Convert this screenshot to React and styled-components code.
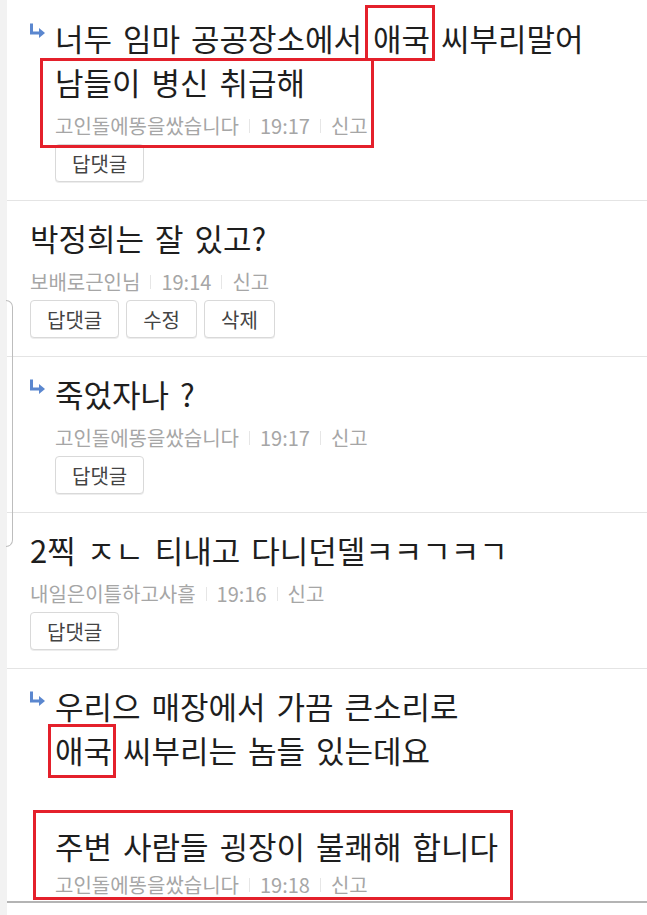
import React from 'react';
import styled, { createGlobalStyle, css } from 'styled-components';

const ReplyArrow = () => (
  <ArrowWrap viewBox="0 0 18 18" width="18" height="18">
    <path d="M3.5 1.5 V11 H12" fill="none" stroke="#5b87cf" strokeWidth="3" />
    <polygon points="11,6 17,11 11,16" fill="#5b87cf" />
  </ArrowWrap>
);

const MetaRow = ({ name, time, gap }) => (
  <Meta $gap={gap}>
    <span>{name}</span>
    <Divider />
    <span>{time}</span>
    <Divider />
    <span>신고</span>
  </Meta>
);

const App = () => {
  return (
    <>
      <GlobalStyle />
      <Page>
        <Rail />
        <List>
          <Comment $reply>
            <Text>
              <ReplyArrow />
              너두 임마 공공장소에서{' '}
              <Mark $t={-11} $r={-5} $b={-1} $l={-8}>애국</Mark> 씨부리말어
            </Text>
            <Boxed $t={-2} $r={-6} $b={-10} $l={-15}>
              <Text>남들이 병신 취급해</Text>
              <MetaRow name="고인돌에똥을쌌습니다" time="19:17" />
            </Boxed>
            <Actions>
              <ActionButton>답댓글</ActionButton>
            </Actions>
          </Comment>

          <Comment>
            <Text>박정희는 잘 있고?</Text>
            <MetaRow name="보배로근인님" time="19:14" />
            <Actions>
              <ActionButton>답댓글</ActionButton>
              <ActionButton>수정</ActionButton>
              <ActionButton>삭제</ActionButton>
            </Actions>
          </Comment>

          <Comment $reply>
            <Text>
              <ReplyArrow />
              죽었자나 ?
            </Text>
            <MetaRow name="고인돌에똥을쌌습니다" time="19:17" />
            <Actions>
              <ActionButton>답댓글</ActionButton>
            </Actions>
          </Comment>

          <Comment>
            <Text>2찍 ㅈㄴ 티내고 다니던델ㅋㅋㄱㅋㄱ</Text>
            <MetaRow name="내일은이틀하고사흘" time="19:16" />
            <Actions>
              <ActionButton>답댓글</ActionButton>
            </Actions>
          </Comment>

          <Comment $reply $last>
            <Text>
              <ReplyArrow />
              우리으 매장에서 가끔 큰소리로
              <br />
              <Mark $t={-4} $r={-4} $b={-6} $l={-7}>애국</Mark> 씨부리는 놈들 있는데요
            </Text>
            <Boxed $t={-14} $r={-15} $b={-3} $l={-22} $mt={52}>
              <Text>주변 사람들 굉장이 불쾌해 합니다</Text>
              <MetaRow name="고인돌에똥을쌌습니다" time="19:18" gap={5} />
            </Boxed>
          </Comment>
        </List>
        <FocusEdge />
      </Page>
    </>
  );
};

export default App;

const GlobalStyle = createGlobalStyle`
  body {
    margin: 0;
    padding: 0;
    background: #fff;
    font-family: "Noto Sans CJK KR", "Noto Sans", sans-serif;
  }
`;

const Page = styled.div`
  position: relative;
  display: flex;
  min-height: 915px;
`;

const Rail = styled.div`
  width: 7px;
  flex-shrink: 0;
  background: #f2f2f2;
`;

const List = styled.div`
  flex: 1;
  display: flex;
  flex-direction: column;
`;

const Comment = styled.article`
  padding: 15px 0 18px ${({ $reply }) => ($reply ? '48px' : '23px')};
  border-bottom: ${({ $last }) => ($last ? '2px solid #b4b4b4' : '1px solid #e4e4e4')};
  ${({ $last }) => $last && css`padding-bottom: 4px;`}

  &:first-child {
    padding-top: 16px;
  }
`;

const Text = styled.p`
  margin: 0;
  font-size: 31px;
  line-height: 44px;
  color: #1e1e1e;
  word-spacing: 4px;
  white-space: nowrap;
`;

const ArrowWrap = styled.svg`
  display: inline-block;
  vertical-align: top;
  margin: 6px 9px 0 -27px;
`;

const redFrame = css`
  position: relative;

  &::after {
    content: '';
    position: absolute;
    top: ${({ $t }) => $t}px;
    right: ${({ $r }) => $r}px;
    bottom: ${({ $b }) => $b}px;
    left: ${({ $l }) => $l}px;
    border: 3px solid #e4202b;
    pointer-events: none;
  }
`;

const Mark = styled.span`
  display: inline-block;
  ${redFrame}
`;

const Boxed = styled.div`
  width: fit-content;
  margin-top: ${({ $mt }) => $mt || 0}px;
  ${redFrame}
`;

const Meta = styled.div`
  display: flex;
  align-items: center;
  margin-top: ${({ $gap }) => ($gap ?? 10)}px;
  font-size: 20px;
  line-height: 24px;
  color: #a6a6a6;
  white-space: nowrap;
`;

const Divider = styled.i`
  display: block;
  width: 1px;
  height: 14px;
  margin: 0 10px;
  background: #e6e6e6;
`;

const Actions = styled.div`
  display: flex;
  gap: 7px;
  margin-top: 6px;
`;

const ActionButton = styled.button`
  box-sizing: border-box;
  height: 38px;
  padding: 0 16px;
  background: #fff;
  border: 1px solid #d9d9d9;
  border-radius: 4px;
  box-shadow: 0 1px 0 #ededed;
  font-family: inherit;
  font-size: 20px;
  color: #444;
  cursor: pointer;
`;

const FocusEdge = styled.div`
  position: absolute;
  left: 6px;
  top: 300px;
  width: 7px;
  height: 247px;
  box-sizing: border-box;
  border: 1.5px solid #bdbdbd;
  border-left: none;
  border-radius: 0 7px 7px 0;
  pointer-events: none;
`;
